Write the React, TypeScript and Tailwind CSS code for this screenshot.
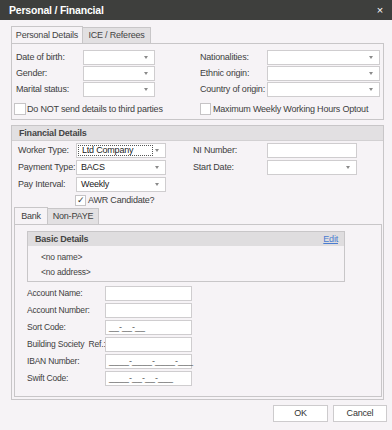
import React from "react";

const font = { fontFamily: '"Liberation Sans", Arial, sans-serif' };

function Arrow() {
  return (
    <span className="ml-auto mr-[6px] h-0 w-0 shrink-0 border-l-[2.5px] border-r-[2.5px] border-t-[3px] border-l-transparent border-r-transparent border-t-[#8a8a8a]" />
  );
}

function Combo({ w, value, focus }: { w: string; value?: string; focus?: boolean }) {
  return (
    <div className={`${w} flex h-[15px] shrink-0 items-center border border-[#cfcdcf] bg-white text-[#222]`}>
      {value &&
        (focus ? (
          <span className="ml-[1px] flex h-[11px] w-[75px] items-center border border-dotted border-[#555] pl-[3px]">
            {value}
          </span>
        ) : (
          <span className="pl-[4px]">{value}</span>
        ))}
      <Arrow />
    </div>
  );
}

function TextBox({ w, mask }: { w: string; mask?: string }) {
  return (
    <div className={`${w} flex h-[15px] shrink-0 items-center border border-[#cfcdcf] bg-white pl-[3px] leading-none tracking-normal text-[#555]`}>
      {mask}
    </div>
  );
}

function Check({ checked }: { checked?: boolean }) {
  return (
    <span className="flex h-[11px] w-[11px] shrink-0 items-center justify-center border border-[#c6c4c6] bg-white text-[9px] leading-none text-[#333]">
      {checked ? "✓" : ""}
    </span>
  );
}

export default function App() {
  const personalLeft = ["Date of birth:", "Gender:", "Marital status:"];
  const personalRight = ["Nationalities:", "Ethnic origin:", "Country of origin:"];
  const bankRows = [
    { label: "Account Name:" },
    { label: "Account Number:" },
    { label: "Sort Code:", mask: "__-__-__" },
    { label: "Building Society  Ref.:" },
    { label: "IBAN Number:", mask: "____-____-____-___" },
    { label: "Swift Code:", mask: "____-__-__-___" },
  ];

  return (
    <div style={font} className="flex h-[430px] w-[392px] flex-col overflow-hidden whitespace-nowrap bg-[#f6f3f6] text-[9px] leading-[11px] tracking-[-0.2px] text-[#404040]">
      {/* title bar */}
      <div className="flex h-[20px] shrink-0 items-center justify-between bg-[#3e3f3d] pl-[9px] pr-[9px] text-white">
        <span className="text-[10.5px] font-bold">Personal / Financial</span>
        <span className="text-[11px] leading-none">×</span>
      </div>

      <div className="ml-[11px] mr-[8px] flex flex-col">
        {/* personal tabs */}
        <div className="mt-[6px] flex h-[18px] items-end">
          <div className="flex h-[18px] w-[72px] items-center justify-center border border-b-0 border-[#c8c6c8] bg-[#f6f3f6] text-[#444]">
            Personal Details
          </div>
          <div className="flex h-[17px] w-[68px] items-center justify-center border border-l-0 border-[#c8c6c8] bg-[#e2e0e2] text-[#444]">
            ICE / Referees
          </div>
        </div>
        <div className="-mt-[1px] h-[77px] border border-[#c8c6c8] px-[4px] pt-[6px]">
          <div className="flex">
            <div className="flex w-[139px] shrink-0 flex-col gap-[1px]">
              {personalLeft.map((l) => (
                <div key={l} className="flex items-center">
                  <span className="w-[67px] shrink-0">{l}</span>
                  <Combo w="w-[72px]" />
                </div>
              ))}
            </div>
            <div className="ml-[45px] flex w-[180px] shrink-0 flex-col gap-[1px]">
              {personalRight.map((l) => (
                <div key={l} className="flex items-center">
                  <span className="w-[67px] shrink-0">{l}</span>
                  <Combo w="w-[113px]" />
                </div>
              ))}
            </div>
          </div>
          <div className="mt-[6px] flex items-center">
            <div className="flex w-[184px] shrink-0 items-center gap-[1px]">
              <span className="-ml-[2px] flex h-[12px] w-[12px] border border-[#c6c4c6] bg-white" />
              <span>Do NOT send details to third parties</span>
            </div>
            <div className="flex items-center gap-[2px]">
              <span className="flex h-[12px] w-[11px] border border-[#c6c4c6] bg-white" />
              <span>Maximum Weekly Working Hours Optout</span>
            </div>
          </div>
        </div>

        {/* financial group */}
        <div className="mt-[5px] flex h-[275px] flex-col border border-[#c8c6c8]">
          <div className="flex h-[15px] shrink-0 items-center border-b border-[#d2d0d2] bg-[#e2e0e2] pl-[7px] font-bold text-[#444]">
            Financial Details
          </div>
          <div className="flex pl-[6px] pt-[2px]">
            <div className="flex w-[148px] shrink-0 flex-col gap-[2px]">
              <div className="flex items-center">
                <span className="w-[58px] shrink-0">Worker Type:</span>
                <Combo w="w-[90px]" value="Ltd Company" focus />
              </div>
              <div className="flex items-center">
                <span className="w-[58px] shrink-0">Payment Type:</span>
                <Combo w="w-[90px]" value="BACS" />
              </div>
              <div className="flex items-center">
                <span className="w-[58px] shrink-0">Pay Interval:</span>
                <Combo w="w-[90px]" value="Weekly" />
              </div>
              <div className="ml-[57px] mt-[1px] flex items-center gap-[2px]">
                <Check checked />
                <span>AWR Candidate?</span>
              </div>
            </div>
            <div className="ml-[27px] flex flex-col gap-[2px]">
              <div className="flex items-center">
                <span className="w-[74px] shrink-0">NI Number:</span>
                <TextBox w="w-[90px]" />
              </div>
              <div className="flex items-center">
                <span className="w-[74px] shrink-0">Start Date:</span>
                <Combo w="w-[90px]" />
              </div>
            </div>
          </div>

          {/* bank tabs */}
          <div className="ml-[2px] mr-[1px] mt-[1px] flex h-[18px] items-end">
            <div className="flex h-[18px] w-[34px] items-center justify-center border border-b-0 border-[#c8c6c8] bg-[#f6f3f6]">
              Bank
            </div>
            <div className="flex h-[17px] w-[51px] items-center justify-center border border-l-0 border-[#c8c6c8] bg-[#e2e0e2]">
              Non-PAYE
            </div>
          </div>
          <div className="-mt-[1px] mb-[2px] ml-[2px] mr-[1px] flex flex-1 flex-col border border-[#c8c6c8] pl-[12px] pt-[6px]">
            <div className="flex h-[51px] w-[318px] flex-col border border-[#c8c6c8]">
              <div className="flex h-[14px] items-center justify-between bg-[#dfdddf] pl-[7px] pr-[6px]">
                <span className="font-bold text-[#444]">Basic Details</span>
                <span className="text-[#4a7bd0] underline">Edit</span>
              </div>
              <div className="flex flex-col gap-[4px] pl-[13px] pt-[6px] text-[8.5px] text-[#444]">
                <span>&lt;no name&gt;</span>
                <span>&lt;no address&gt;</span>
              </div>
            </div>
            <div className="mt-[4px] flex flex-col gap-[2px]">
              {bankRows.map((r) => (
                <div key={r.label} className="flex items-center">
                  <span className="w-[78px] shrink-0 whitespace-pre text-[8.5px]">{r.label}</span>
                  <TextBox w="w-[87px]" mask={r.mask} />
                </div>
              ))}
            </div>
          </div>
        </div>
      </div>

      {/* buttons */}
      <div className="mr-[5px] mt-[5px] flex justify-end gap-[5px]">
        <button className="h-[17px] w-[55px] border border-[#cdcbcd] bg-white text-[#333]">OK</button>
        <button className="h-[17px] w-[54px] border border-[#cdcbcd] bg-white text-[#333]">Cancel</button>
      </div>
    </div>
  );
}
